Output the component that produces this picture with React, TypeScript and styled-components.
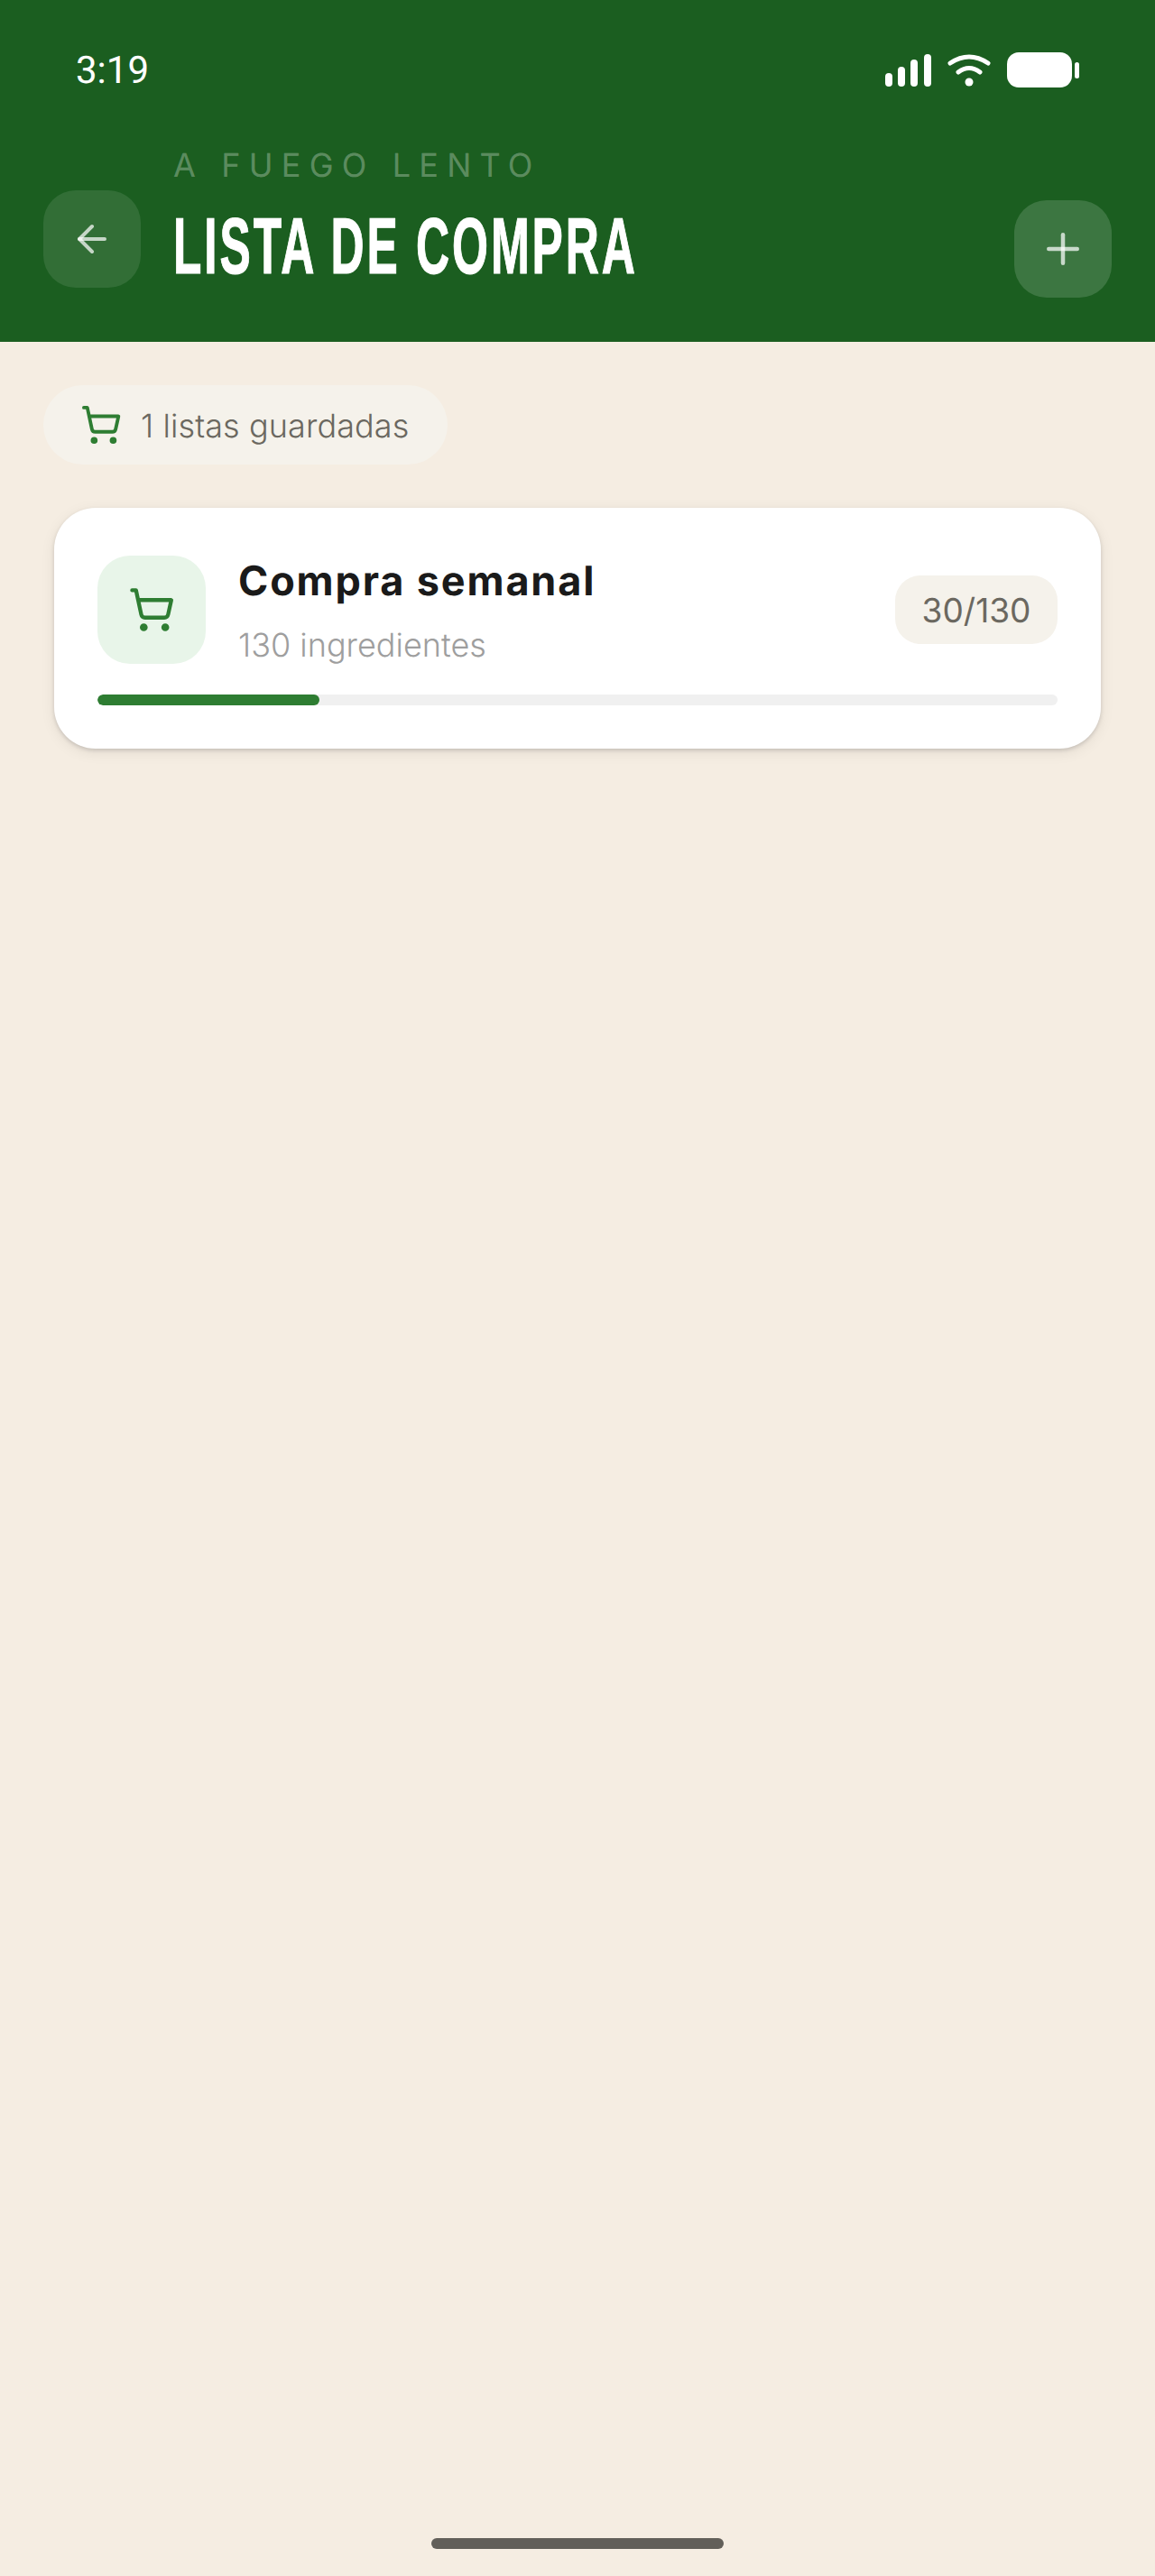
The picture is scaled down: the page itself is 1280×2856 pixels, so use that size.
import React from "react";
import styled, { createGlobalStyle } from "styled-components";
import { ArrowLeft, Plus, ShoppingCart } from "lucide-react";

const Global = createGlobalStyle`
  html, body { margin: 0; padding: 0; background: #F5EDE2; }
  * { box-sizing: border-box; }
  body { text-rendering: geometricPrecision; }
`;

const Screen = styled.div`
  width: 1280px;
  height: 2856px;
  background: #F5EDE2;
  display: flex;
  flex-direction: column;
  font-family: Inter, "Liberation Sans", sans-serif;
`;

const Header = styled.header`
  height: 379px;
  background: #1B5E20;
  display: flex;
  flex-direction: column;
  flex: none;
`;

const StatusBar = styled.div`
  height: 154px;
  padding: 60px 84px 0 84px;
  display: flex;
  justify-content: space-between;
  align-items: flex-start;
`;

const Time = styled.span`
  font-family: Roboto, sans-serif;
  font-size: 42px;
  line-height: 38px;
  color: #fff;
`;

const StatusIcons = styled.div`
  display: flex;
  align-items: center;
  margin-top: -2px;
`;

const NavRow = styled.div`
  flex: 1;
  display: flex;
  padding: 0 48px;
  gap: 37px;
`;

const IconButton = styled.div<{ $alpha: number; $top: number }>`
  width: 108px;
  height: 108px;
  flex: none;
  margin-top: ${(p) => p.$top}px;
  border-radius: 36px;
  background: rgba(255, 255, 255, ${(p) => p.$alpha});
  color: rgba(255, 255, 255, 0.72);
  display: flex;
  align-items: center;
  justify-content: center;
`;

const TitleBlock = styled.div`
  flex: 1;
  min-width: 0;
  display: flex;
  flex-direction: column;
`;

const Eyebrow = styled.div`
  font-size: 36px;
  font-weight: 400;
  line-height: 44px;
  margin: 7px 0 0 -1px;
  letter-spacing: 9.2px;
  color: rgba(255, 255, 255, 0.3);
  white-space: nowrap;
`;

const Title = styled.h1`
  margin: 24px 0 0 -1px;
  font-family: "Liberation Sans", sans-serif;
  font-weight: 700;
  font-size: 88px;
  line-height: 88px;
  letter-spacing: 5px;
  color: #fff;
  white-space: nowrap;
  transform: scaleX(0.584);
  transform-origin: left center;
  -webkit-text-stroke: 1.2px #fff;
`;

const Body = styled.main`
  flex: 1;
  display: flex;
  flex-direction: column;
  align-items: flex-start;
  padding: 48px 48px 0;
`;

const CountPill = styled.div`
  height: 88px;
  width: 448px;
  border-radius: 44px;
  background: #F5F2EB;
  display: flex;
  align-items: center;
  padding-left: 41px;
  gap: 21px;
  color: #2E7D32;
`;

const CountText = styled.span`
  font-size: 36px;
  font-weight: 300;
  letter-spacing: 0.1px;
  color: #6B6860;
  margin-top: 1px;
`;

const Card = styled.section`
  margin: 48px 12px 0;
  width: 1160px;
  height: 267px;
  border-radius: 46px;
  background: #fff;
  box-shadow: 0 2px 4px rgba(0, 0, 0, 0.14), 0 4px 16px rgba(0, 0, 0, 0.08);
  padding: 53px 48px 0;
  display: flex;
  flex-direction: column;
`;

const CardRow = styled.div`
  display: flex;
  align-items: center;
  height: 120px;
`;

const CartBox = styled.div`
  width: 120px;
  height: 120px;
  border-radius: 36px;
  background: #E8F5E9;
  color: #2E7D32;
  display: flex;
  align-items: center;
  justify-content: center;
  flex: none;
`;

const CardText = styled.div`
  flex: 1;
  align-self: flex-start;
  margin-left: 36px;
  display: flex;
  flex-direction: column;
`;

const CardTitle = styled.div`
  font-family: Inter, sans-serif;
  font-weight: 700;
  font-size: 45px;
  letter-spacing: 1.85px;
  line-height: 56px;
  color: #1A1A1A;
`;

const CardSub = styled.div`
  margin-top: 21px;
  font-size: 36px;
  font-weight: 300;
  line-height: 44px;
  color: #9E9E9E;
`;

const Ratio = styled.div`
  width: 180px;
  height: 76px;
  border-radius: 28px;
  background: #F5F2EB;
  color: #6B6860;
  font-size: 37px;
  font-weight: 400;
  display: flex;
  align-items: center;
  justify-content: center;
`;

const Track = styled.div`
  height: 12px;
  margin-top: 34px;
  border-radius: 6px;
  background: #F0F0F0;
  overflow: hidden;
`;

const Fill = styled.div`
  height: 100%;
  border-radius: 6px;
  background: #2E7D32;
`;

const HomeBar = styled.div`
  position: absolute;
  left: 478px;
  top: 2814px;
  width: 324px;
  height: 12px;
  border-radius: 6px;
  background: #625F59;
`;

const SignalIcon = () => (
  <svg width="51" height="36" viewBox="0 0 51 36" fill="#fff" style={{ marginRight: 18 }}>
    <rect x="0" y="21" width="8" height="15" rx="4" />
    <rect x="14" y="14" width="8" height="22" rx="4" />
    <rect x="28" y="6" width="8" height="30" rx="4" />
    <rect x="43" y="0" width="8" height="36" rx="4" />
  </svg>
);

const WifiIcon = () => (
  <svg width="48" height="36" viewBox="0 0 48 36" fill="none" stroke="#fff" strokeLinecap="round" style={{ marginRight: 18 }}>
    <path d="M3 10Q24 -4 45 10" strokeWidth="5" />
    <path d="M12 20Q24 11 36 20" strokeWidth="5" />
    <circle cx="24" cy="31" r="4.5" fill="#fff" stroke="none" />
  </svg>
);

const BatteryIcon = () => (
  <svg width="80" height="39" viewBox="0 0 80 39" fill="#fff">
    <rect x="0" y="0" width="72" height="39" rx="13" />
    <rect x="75" y="11" width="5" height="18" rx="2.5" />
  </svg>
);

export default function App() {
  return (
    <Screen>
      <Global />
      <Header>
        <StatusBar>
          <Time>3:19</Time>
          <StatusIcons>
            <SignalIcon />
            <WifiIcon />
            <BatteryIcon />
          </StatusIcons>
        </StatusBar>
        <NavRow>
          <IconButton $alpha={0.1} $top={57}>
            <ArrowLeft size={48} strokeWidth={2} />
          </IconButton>
          <TitleBlock>
            <Eyebrow>A FUEGO LENTO</Eyebrow>
            <Title>LISTA DE COMPRA</Title>
          </TitleBlock>
          <IconButton $alpha={0.15} $top={68}>
            <Plus size={54} strokeWidth={2} />
          </IconButton>
        </NavRow>
      </Header>
      <Body>
        <CountPill>
          <ShoppingCart size={46} strokeWidth={2} />
          <CountText>1 listas guardadas</CountText>
        </CountPill>
        <Card>
          <CardRow>
            <CartBox>
              <ShoppingCart size={52} strokeWidth={2} />
            </CartBox>
            <CardText>
              <CardTitle>Compra semanal</CardTitle>
              <CardSub>130 ingredientes</CardSub>
            </CardText>
            <Ratio>30/130</Ratio>
          </CardRow>
          <Track>
            <Fill style={{ width: `${(30 / 130) * 100}%` }} />
          </Track>
        </Card>
      </Body>
      <HomeBar />
    </Screen>
  );
}
